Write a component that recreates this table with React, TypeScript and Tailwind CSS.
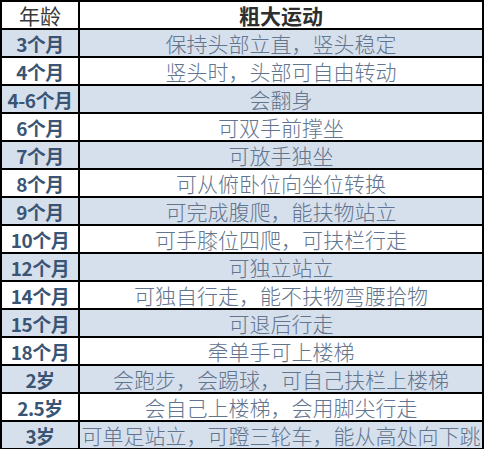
type Row = {
  age: string;
  skill: string;
};

const rows: Row[] = [
  { age: "3个月", skill: "保持头部立直，竖头稳定" },
  { age: "4个月", skill: "竖头时，头部可自由转动" },
  { age: "4-6个月", skill: "会翻身" },
  { age: "6个月", skill: "可双手前撑坐" },
  { age: "7个月", skill: "可放手独坐" },
  { age: "8个月", skill: "可从俯卧位向坐位转换" },
  { age: "9个月", skill: "可完成腹爬，能扶物站立" },
  { age: "10个月", skill: "可手膝位四爬，可扶栏行走" },
  { age: "12个月", skill: "可独立站立" },
  { age: "14个月", skill: "可独自行走，能不扶物弯腰拾物" },
  { age: "15个月", skill: "可退后行走" },
  { age: "18个月", skill: "牵单手可上楼梯" },
  { age: "2岁", skill: "会跑步，会踢球，可自己扶栏上楼梯" },
  { age: "2.5岁", skill: "会自己上楼梯，会用脚尖行走" },
  { age: "3岁", skill: "可单足站立，可蹬三轮车，能从高处向下跳" },
];

const cjk = "font-['Noto_Sans_CJK_SC','Noto_Sans',sans-serif]";

export default function App() {
  return (
    <div className="h-[449px] w-[486px] overflow-hidden bg-white">
      <div className="w-[484px] border-x-2 border-t-2 border-black">
        <div className="flex h-[28px] border-b-2 border-black bg-white">
          <div className={`${cjk} flex w-[78px] items-center justify-center border-r-2 border-black text-[21px] leading-none font-normal text-[#3a3a3a]`}>
            年龄
          </div>
          <div className={`${cjk} flex flex-1 items-center justify-center text-[21px] leading-none font-bold text-[#2e2e2e]`}>
            粗大运动
          </div>
        </div>
        {rows.map((r, i) => (
          <div
            key={r.age}
            className={`flex h-[28px] border-b-2 border-black ${i % 2 === 0 ? "bg-[#d6dfec]" : "bg-white"}`}
          >
            <div className={`${cjk} flex w-[78px] items-center justify-center border-r-2 border-black text-[19px] leading-none font-bold tracking-[-0.5px] text-[#3a5574]`}>
              {r.age}
            </div>
            <div className={`${cjk} flex flex-1 items-center justify-center whitespace-nowrap text-[21px] leading-none font-light text-[#62758e]`}>
              {r.skill}
            </div>
          </div>
        ))}
      </div>
    </div>
  );
}
